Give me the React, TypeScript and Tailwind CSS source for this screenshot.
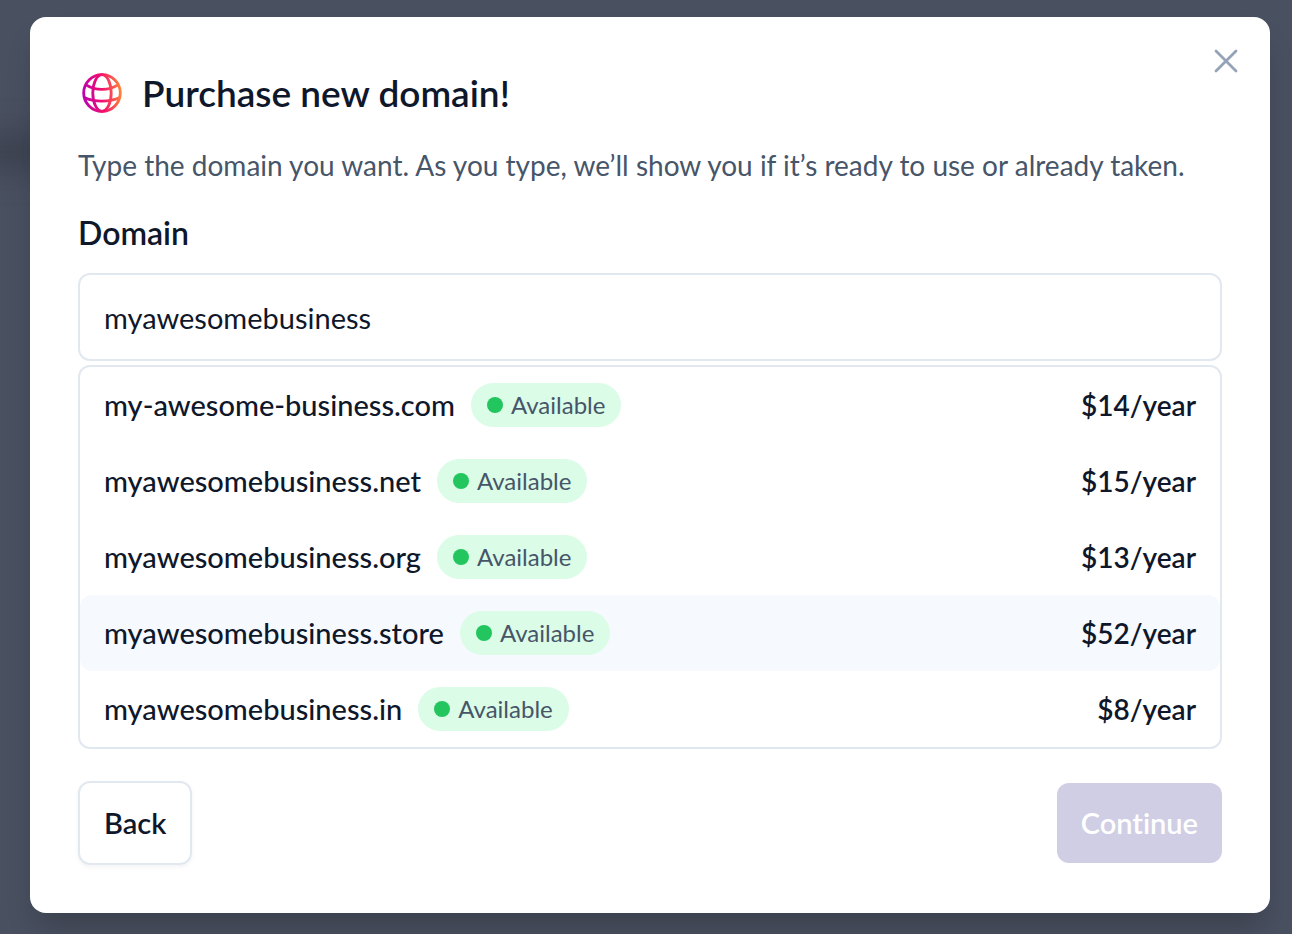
interface DomainOption {
  name: string;
  price: number;
}

const domains: DomainOption[] = [
  { name: "my-awesome-business.com", price: 14 },
  { name: "myawesomebusiness.net", price: 15 },
  { name: "myawesomebusiness.org", price: 13 },
  { name: "myawesomebusiness.store", price: 52 },
  { name: "myawesomebusiness.in", price: 8 },
];

const GlobeIcon = () => (
  <svg viewBox="0 0 48 48" className="size-12" fill="none" aria-hidden="true">
    <defs>
      <linearGradient id="globe" x1="4" y1="24" x2="44" y2="20" gradientUnits="userSpaceOnUse">
        <stop stopColor="#b800b1" />
        <stop offset="0.5" stopColor="#f50f6c" />
        <stop offset="1" stopColor="#ff8a35" />
      </linearGradient>
    </defs>
    <g stroke="url(#globe)" strokeWidth="2.8">
      <circle cx="24" cy="24" r="18.3" />
      <ellipse cx="24" cy="24" rx="9.2" ry="18.3" />
      <path d="M8 15.800c9 6 23 6 32 0M6.200 28.500c10 4.800 25.600 4.800 35.600 0" />
    </g>
  </svg>
);

const AvailableBadge = () => (
  <span className="flex h-11 items-center gap-2 rounded-full bg-green-100 px-4 text-2xl font-normal text-[#475569]">
    <span className="size-4 rounded-full bg-[#22c55e]" />
    Available
  </span>
);

const DomainRow = ({ domain, active }: { domain: DomainOption; active: boolean }) => (
  <li>
    <button
      type="button"
      className={`flex h-19 w-full items-center justify-between rounded-xl px-6 ${active ? "bg-[#f6f9fe]" : ""}`}
    >
      <span className="flex items-center gap-4 text-[29px] font-medium">
        {domain.name}
        <AvailableBadge />
      </span>
      <span className="font-semibold">${domain.price}/year</span>
    </button>
  </li>
);

const App = () => {
  return (
    <div className="relative min-h-screen overflow-hidden bg-[#495060] pt-[17px] pr-[22px] pb-5 pl-[30px] font-['Lato',sans-serif] text-[28px] leading-10 text-[#0f172a] [font-variant-ligatures:none]">
      <div className="absolute top-34 -left-10 h-8 w-24 bg-[#3b404e] blur-lg" />
      <div
        role="dialog"
        aria-labelledby="dialog-title"
        className="relative rounded-2xl bg-white p-12 shadow-[0_20px_30px_-6px_rgba(0,0,0,0.2)]"
      >
        <button type="button" aria-label="Close" className="absolute top-8 right-8 text-[#94a3b8]">
          <svg viewBox="0 0 24 24" className="size-6" fill="none" stroke="currentColor" strokeWidth="2.8" strokeLinecap="round">
            <path d="M2 2l20 20M22 2L2 22" />
          </svg>
        </button>

        <div className="flex h-14 items-center gap-4">
          <GlobeIcon />
          <h2 id="dialog-title" className="text-[37px] font-semibold">
            Purchase new domain!
          </h2>
        </div>
        <p className="mt-6 text-[#475569]">
          Type the domain you want. As you type, we’ll show you if it’s ready to use or already taken.
        </p>

        <label htmlFor="domain" className="mt-6 block text-[32px] leading-12 font-semibold">
          Domain
        </label>
        <input
          id="domain"
          type="text"
          defaultValue="myawesomebusiness"
          className="mt-4 block h-22 w-full rounded-xl border-2 border-[#e2e8f0] px-6 text-[29px] outline-none"
        />
        <ul className="mt-1 rounded-xl border-2 border-[#e2e8f0]">
          {domains.map((domain) => (
            <DomainRow key={domain.name} domain={domain} active={domain.price === 52} />
          ))}
        </ul>

        <div className="mt-8 flex items-center justify-between text-[29px] font-semibold">
          <button
            type="button"
            className="h-21 rounded-xl border-2 border-[#e2e8f0] px-6 shadow-[0_2px_4px_rgba(0,0,0,0.05)]"
          >
            Back
          </button>
          <button type="button" disabled className="h-20 rounded-xl bg-[#cfcee4] px-6 text-white">
            Continue
          </button>
        </div>
      </div>
    </div>
  );
};

export default App;
